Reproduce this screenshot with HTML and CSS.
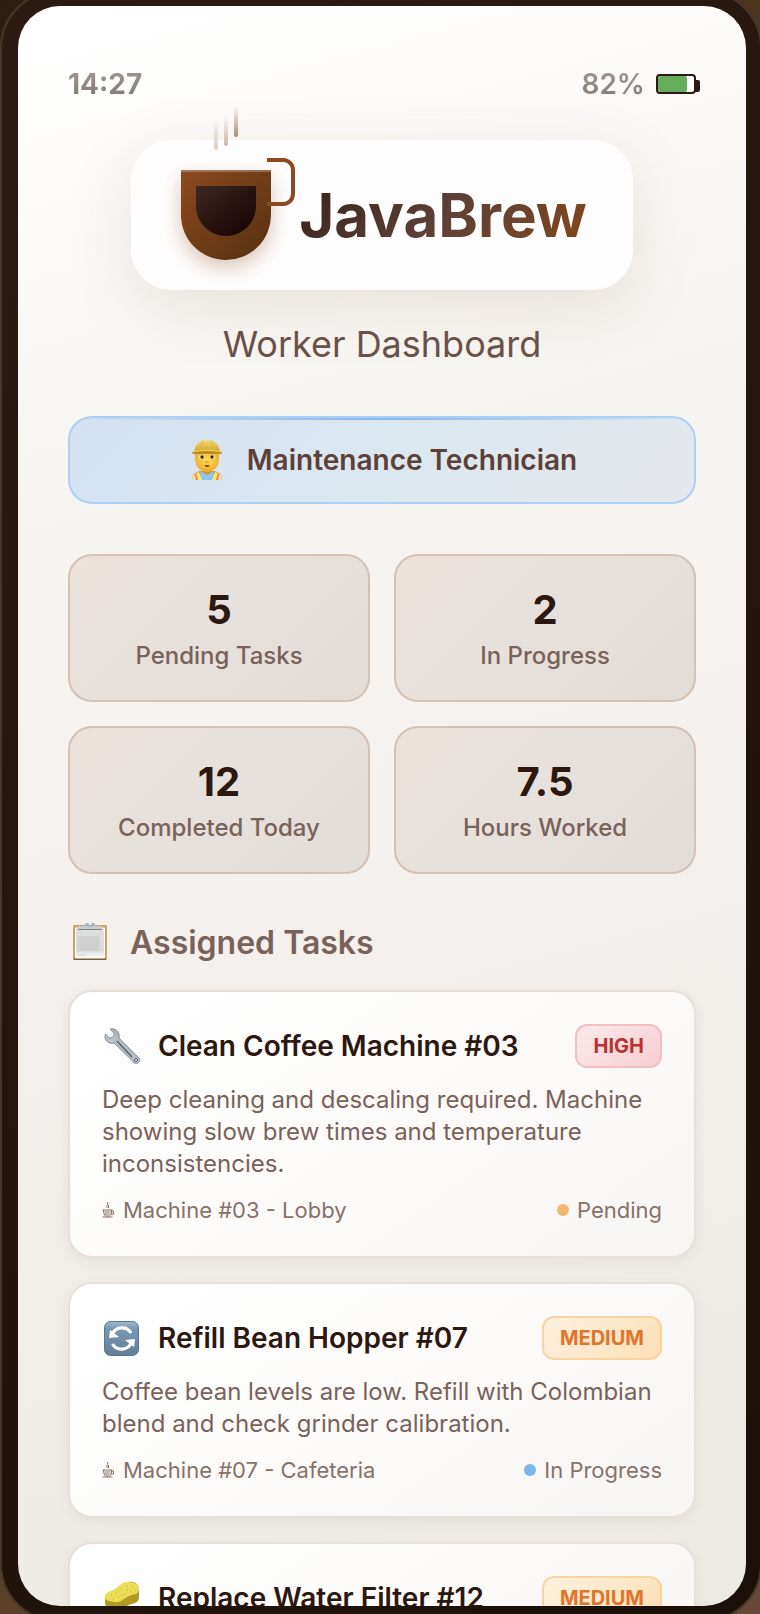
FILE: index.html
```html
<!DOCTYPE html>
<html lang="en">
<head>
<meta charset="utf-8">
<meta name="viewport" content="width=device-width, initial-scale=1">
<title>JavaBrew Worker Dashboard</title>
<link rel="stylesheet" href="styles.css">
</head>
<body>
<div class="phone">
<main class="screen">
  <div class="status">
    <span class="status-text time">14:27</span>
    <span class="power">
      <span class="status-text">82%</span>
      <svg class="battery" viewBox="0 0 44 20" aria-hidden="true">
        <rect x="1" y="1" width="38" height="18" rx="3" fill="#fff" stroke="#2c1810" stroke-width="2"/>
        <rect x="2" y="2" width="29" height="16" rx="2" fill="#66ad5b"/>
        <path d="M39 6h3a2 2 0 0 1 2 2v8a2 2 0 0 1-2 2h-3z" fill="#2c1810"/>
      </svg>
    </span>
  </div>

  <header class="brand">
    <div class="logo">
      <svg class="cup" viewBox="0 0 90 90" aria-hidden="true">
        <defs>
          <linearGradient id="cup" x1="0" y1="0" x2="1" y2="1"><stop offset="0" stop-color="#8b4a20"/><stop offset="1" stop-color="#55300f"/></linearGradient>
          <linearGradient id="coffee" x1="0" y1="0" x2="1" y2="1"><stop offset="0" stop-color="#3e2723"/><stop offset="1" stop-color="#150000"/></linearGradient>
          <linearGradient id="steam" x1="0" y1="0" x2="0" y2="1"><stop offset="0" stop-color="#a3704c" stop-opacity="0"/><stop offset="1" stop-color="#a3704c"/></linearGradient>
        </defs>
        <path class="cup-body" d="M0 0h90v45a45 45 0 0 1-90 0z" fill="url(#cup)"/>
        <path d="M0 0h90v2H0z" fill="#fff" opacity=".25"/>
        <path d="M15 16h60v20a30 30 0 0 1-60 0z" fill="url(#coffee)"/>
        <path d="M86-10h16a10 10 0 0 1 10 10v24a10 10 0 0 1-10 10H86" fill="none" stroke="#8b4a20" stroke-width="4"/>
        <rect x="33" y="-50" width="4" height="30" rx="2" fill="url(#steam)" opacity=".35"/>
        <rect x="43" y="-54" width="4" height="30" rx="2" fill="url(#steam)" opacity=".5"/>
        <rect x="53" y="-64" width="4" height="31" rx="2" fill="url(#steam)" opacity=".8"/>
      </svg>
      <h1 class="name">JavaBrew</h1>
    </div>
    <p class="subtitle">Worker Dashboard</p>
  </header>

  <section class="role">
    <svg class="role-icon" viewBox="0 0 40 40" aria-hidden="true">
      <defs>
        <radialGradient id="face" cx=".5" cy=".35" r=".7"><stop offset="0" stop-color="#ffdf5c"/><stop offset="1" stop-color="#e9a51e"/></radialGradient>
        <linearGradient id="hat" x1="0" y1="0" x2="0" y2="1"><stop offset="0" stop-color="#f4dc78"/><stop offset="1" stop-color="#d3a425"/></linearGradient>
      </defs>
      <path d="M5 40c0-5 3-8 8-9h14c5 1 8 4 8 9z" fill="#ee7d45"/>
      <path d="M14 31h12l3 9H11z" fill="#8cc5f2"/>
      <path d="M9 33l3-1 3 8h-4zM31 33l-3-1-3 8h4z" fill="#f8ee62"/>
      <path d="M5 40c0-3 1-5 3-6l1 6zM35 40c0-3-1-5-3-6l-1 6z" fill="#f1d9b3"/>
      <path d="M15 27h10v5l-5 3-5-3z" fill="#d6931d"/>
      <path d="M8 13h24v6c0 7-5 13-12 13S8 26 8 19z" fill="url(#face)"/>
      <path d="M7 12C8 4 12 0 20 0s12 4 13 12z" fill="url(#hat)"/>
      <path d="M16 1c-2 3-3 6-3 10M24 1c2 3 3 6 3 10" stroke="#d7b443" stroke-width="1" fill="none"/>
      <path d="M5 13c0-2 3-2 15-2s15 0 15 2l-1 1H6z" fill="#c28c1c"/>
      <path d="M6 12c5-2 23-2 28 0" stroke="#f3d964" stroke-width="1" fill="none"/>
      <ellipse cx="14.500" cy="17" rx="2.500" ry="2" fill="#fff3cf"/><ellipse cx="25.500" cy="17" rx="2.500" ry="2" fill="#fff3cf"/>
      <circle cx="15" cy="17" r="1.700" fill="#3a2414"/><circle cx="25" cy="17" r="1.700" fill="#3a2414"/>
      <path d="M17.500 25h5l-1 2h-3z" fill="#8f4d13"/>
      <path d="M18 22h4" stroke="#d2911d"/>
    </svg>
    <span>Maintenance Technician</span>
  </section>

  <section class="stats">
    <div class="stat"><strong>5</strong><span>Pending Tasks</span></div>
    <div class="stat"><strong>2</strong><span>In Progress</span></div>
    <div class="stat"><strong>12</strong><span>Completed Today</span></div>
    <div class="stat"><strong>7.5</strong><span>Hours Worked</span></div>
  </section>

  <h2 class="section-title">
    <svg class="section-icon" viewBox="0 0 44 40" aria-hidden="true">
      <defs><linearGradient id="paper" x1="0" y1="0" x2="0" y2="1"><stop offset="0" stop-color="#dfe0e0"/><stop offset=".75" stop-color="#d9dada"/><stop offset="1" stop-color="#fff"/></linearGradient></defs>
      <rect x="5" y="3" width="34" height="35" rx="1" fill="#c7a468"/>
      <path d="M6 37h32" stroke="#7d613a" stroke-width="2"/>
      <rect x="7.500" y="6" width="29" height="30" fill="url(#paper)" stroke="#f6f6f4"/>
      <path d="M10 14h20l2 4-1 11H10z" fill="#cfd0d0"/>
      <path d="M10 11h5M10 33h7" stroke="#d0d1d1"/>
      <path d="M11 4h22c1 0 2 2 1 3H10c-1-1 0-3 1-3z" fill="#c6cccf"/>
      <path d="M10 7.500h24" stroke="#7e8587"/>
      <path d="M18 4V2h2v2h4V2h2v2" fill="none" stroke="#9fb2bf" stroke-width="1.500"/>
    </svg>
    Assigned Tasks
  </h2>

  <section class="tasks">
    <article class="task">
      <div class="task-head">
        <svg class="task-icon" viewBox="0 0 40 40" aria-hidden="true">
          <defs><linearGradient id="steel" x1="0" y1="1" x2="1" y2="0"><stop offset="0" stop-color="#6f7883"/><stop offset=".5" stop-color="#b9c2cb"/><stop offset="1" stop-color="#646b73"/></linearGradient></defs>
          <path d="M8 3c4-1 8 1 9 5 .5 2 .4 3 0 4l18.500 18.500c2 1 3 3 2 5s-4 3-6 1c-1-1-1-1.500-1.500-2L12 17c-4 1-8-1-9-5-.3-1.500 0-3 .5-4l4 4 4-1.500.5-3z" fill="url(#steel)" stroke="#737b84" stroke-width=".7"/>
          <path d="M15 15l15 16" stroke="#555d66" stroke-width="1.300"/>
          <path d="M4 10c1 4 4 6 8 5" stroke="#d7e0e7" fill="none"/>
          <circle cx="34" cy="34" r="1.500" fill="#eee" stroke="#565b60"/>
        </svg>
        <h3 class="task-title">Clean Coffee Machine #03</h3>
        <span class="badge high">HIGH</span>
      </div>
      <p class="desc">Deep cleaning and descaling required. Machine showing slow brew times and temperature inconsistencies.</p>
      <div class="meta">
        <span class="place"><svg class="mug" viewBox="0 0 12 16" aria-hidden="true"><path d="M0 8h10M1 8c0 4 1 5 2 6h4c2-1 2-3 2-6M9 9h2v3H8M0 15h10M2 10h6M2 12h5M5 6c-2-2 1-3 0-6M6 6V3" fill="none" stroke="currentColor"/></svg>Machine #03 - Lobby</span>
        <span class="state pending">Pending</span>
      </div>
    </article>

    <article class="task">
      <div class="task-head">
        <svg class="task-icon" viewBox="0 0 40 40" aria-hidden="true">
          <defs><linearGradient id="tile" x1="0" y1="0" x2="0" y2="1"><stop offset="0" stop-color="#a3b8cb"/><stop offset=".2" stop-color="#7899b8"/><stop offset="1" stop-color="#647e96"/></linearGradient></defs>
          <rect x="2.500" y="3.500" width="34" height="34" rx="6" fill="url(#tile)" stroke="#587694"/>
          <path d="M10 17a10.500 10.500 0 0 1 19-2M29.500 24a10.500 10.500 0 0 1-19 2" fill="none" stroke="#fff" stroke-width="3.200"/>
          <path d="M8 12l-1 8 10-1zM23 22l10-1-1 8z" fill="#fff"/>
        </svg>
        <h3 class="task-title">Refill Bean Hopper #07</h3>
        <span class="badge medium">MEDIUM</span>
      </div>
      <p class="desc">Coffee bean levels are low. Refill with Colombian blend and check grinder calibration.</p>
      <div class="meta">
        <span class="place"><svg class="mug" viewBox="0 0 12 16" aria-hidden="true"><path d="M0 8h10M1 8c0 4 1 5 2 6h4c2-1 2-3 2-6M9 9h2v3H8M0 15h10M2 10h6M2 12h5M5 6c-2-2 1-3 0-6M6 6V3" fill="none" stroke="currentColor"/></svg>Machine #07 - Cafeteria</span>
        <span class="state progress">In Progress</span>
      </div>
    </article>

    <article class="task">
      <div class="task-head">
        <svg class="task-icon" viewBox="0 0 40 40" aria-hidden="true">
          <path d="M3 20c0-5 5-5 10-8s6-7 13-8 11 3 11 7v8c0 7-7 6-12 9s-8 6-14 5-8-5-8-9z" fill="#b09a24"/>
          <path d="M3 19c0-5 5-5 10-8s6-7 13-7 11 3 11 7c0 6-7 5-12 8s-7 6-13 5-9-2-9-5z" fill="#e9de55"/>
          <path d="M9 17h1M14 15h1M19 11h1M24 8h1M30 9h1M28 13h1M22 16h1M16 19h1M11 21h1M33 12h1M25 12h1M19 17h1" stroke="#c6b837" stroke-width="1.500"/>
        </svg>
        <h3 class="task-title">Replace Water Filter #12</h3>
        <span class="badge medium">MEDIUM</span>
      </div>
    </article>
  </section>
</main>
</div>
</body>
</html>
```

FILE: styles.css
```css
* {
  box-sizing: border-box;
  margin: 0;
}

body {
  height: 100vh;
  overflow: hidden;
  display: grid;
  background: linear-gradient(135deg, #2c1d10 0%, #4d3520 32%, #5a4029 68%, #67493a 100%);
  font-family: Inter, "Liberation Sans", sans-serif;
  color: #2c1810;
}

.phone {
  display: grid;
  min-height: 0;
  margin: -10px -2px -8px 0;
  padding: 14px 14px 14px 16px;
  border: 2px solid #46372b;
  border-radius: 58px;
  background: linear-gradient(145deg, #2c1b12, #1b1009);
}

.screen {
  min-height: 0;
  overflow: hidden;
  padding: 60px 50px 0;
  border-radius: 42px;
  background: linear-gradient(165deg, #fff 0%, #f7f5f2 26%, #f4f1ee 50%, #edeae5 100%);
}

.status,
.power,
.logo,
.role,
.section-title,
.task-head,
.meta,
.place,
.state {
  display: flex;
  align-items: center;
}

.status {
  justify-content: space-between;
  height: 36px;
  margin-bottom: 38px;
}

.status-text {
  font-size: 28px;
  font-weight: 600;
  background: linear-gradient(#a09a97, #7f7671);
  background-clip: text;
  color: transparent;
}

.time {
  font-weight: 700;
}

.power {
  gap: 11px;
  margin-right: -4px;
}

.battery {
  width: 44px;
  height: 20px;
}

.brand {
  display: flex;
  flex-direction: column;
  align-items: center;
}

.logo {
  gap: 28px;
  height: 150px;
  padding: 0 46px 0 50px;
  border-radius: 40px;
  background: #fefdfd;
  box-shadow: 0 16px 64px rgba(120, 75, 45, .13);
}

.cup {
  width: 90px;
  height: 90px;
  overflow: visible;
}

.cup-body {
  filter: drop-shadow(0 8px 10px rgba(139, 69, 19, .3));
}

.name {
  font-size: 60px;
  line-height: 78px;
  font-weight: 700;
  background: linear-gradient(135deg, #33211b 0%, #5d4037 50%, #844719 100%);
  background-clip: text;
  color: transparent;
}

.subtitle {
  margin: 30px 0 48px;
  font-size: 36px;
  line-height: 48px;
  color: #6a5148;
}

.role {
  justify-content: center;
  gap: 20px;
  height: 88px;
  margin-bottom: 50px;
  border: 2px solid #acd0f3;
  border-radius: 24px;
  background:
    linear-gradient(90deg, transparent, #82b8ef, transparent) top / 100% 2px no-repeat,
    linear-gradient(135deg, #d4e1f3, #dce8ef 55%, #e5e7ec);
  font-size: 28px;
  font-weight: 600;
  color: #5d4037;
}

.role-icon {
  width: 40px;
  height: 40px;
}

.stats {
  display: grid;
  grid-template-columns: 1fr 1fr;
  gap: 24px;
  margin-bottom: 48px;
}

.stat {
  display: flex;
  flex-direction: column;
  align-items: center;
  height: 148px;
  padding-top: 30px;
  border: 2px solid #d4c1b4;
  border-radius: 24px;
  background: linear-gradient(135deg, #ece1db, #e6e1dc 45%, #e2ddd9);
}

.stat strong {
  font-size: 40px;
  line-height: 48px;
  font-weight: 700;
}

.stat span {
  margin-top: 8px;
  font-size: 24px;
  line-height: 28px;
  font-weight: 500;
  color: #79625a;
}

.section-title {
  gap: 18px;
  height: 40px;
  margin-bottom: 28px;
  font-size: 32px;
  font-weight: 600;
  color: #79625a;
}

.section-icon {
  width: 44px;
  height: 40px;
}

.tasks {
  display: grid;
  gap: 24px;
}

.task {
  padding: 32px;
  border: 2px solid #e9dfd9;
  border-radius: 24px;
  background: linear-gradient(145deg, #fff, #f8f6f4);
  box-shadow: 0 4px 12px rgba(90, 60, 40, .08);
}

.task-head {
  gap: 16px;
  height: 44px;
}

.task-icon {
  width: 40px;
  height: 40px;
}

.task-title {
  flex: 1;
  font-size: 28px;
  font-weight: 600;
}

.badge {
  display: flex;
  align-items: center;
  height: 44px;
  padding: 0 16px;
  border: 2px solid;
  border-radius: 12px;
  font-size: 20px;
  font-weight: 700;
}

.high {
  border-color: #f4bfc2;
  background: linear-gradient(135deg, #fce9eb, #f7ced3);
  color: #b93430;
}

.medium {
  border-color: #f8d5a0;
  background: linear-gradient(135deg, #fef1df, #fbdfb5);
  color: #e0742c;
}

.desc {
  margin: 16px 0;
  font-size: 24px;
  line-height: 32px;
  color: #79625a;
}

.meta {
  justify-content: space-between;
  height: 28px;
  font-size: 22px;
  color: #877169;
}

.place,
.state {
  gap: 8px;
}

.mug {
  width: 13px;
  height: 16px;
}

.state::before {
  content: "";
  width: 12px;
  height: 12px;
  border-radius: 50%;
}

.pending::before {
  background: #f4b66e;
}

.progress::before {
  background: #7db4ee;
}
```
